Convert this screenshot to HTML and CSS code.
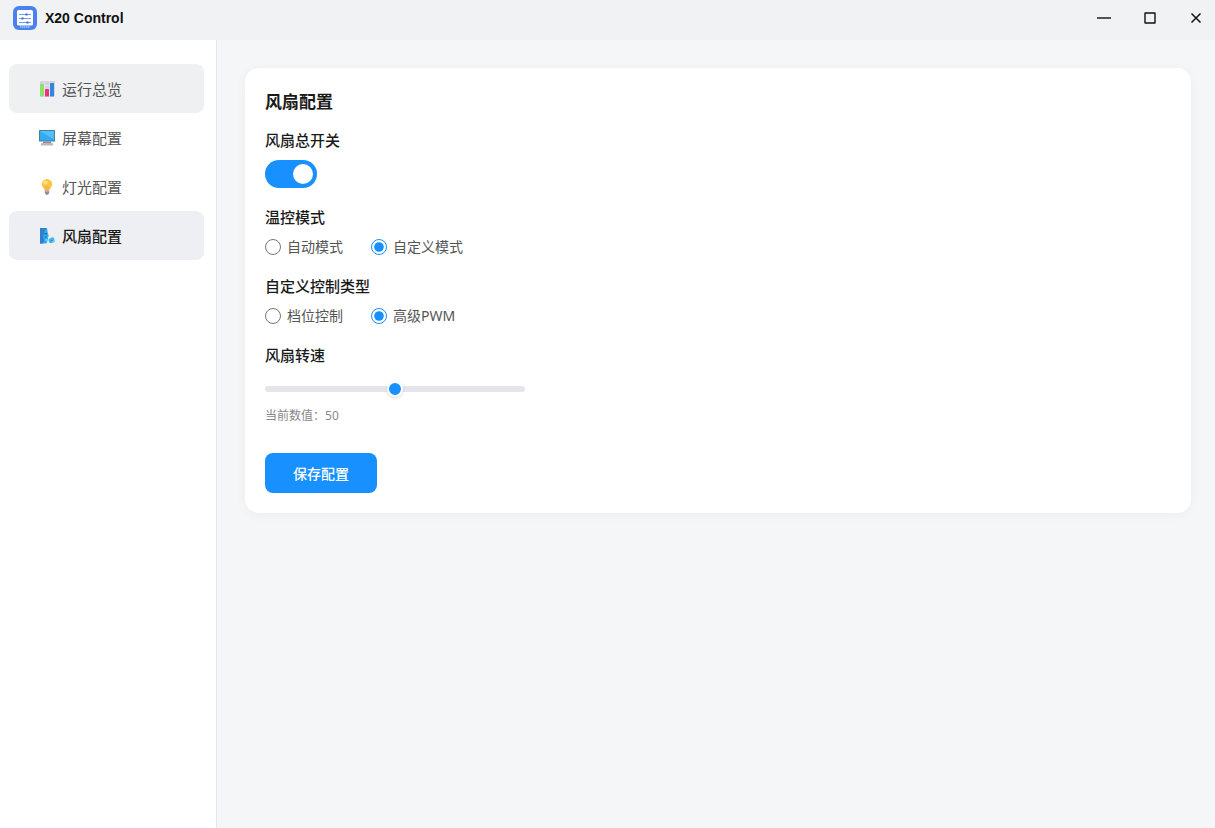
FILE: index.html
```html
<!DOCTYPE html>
<html lang="zh-CN">
<head>
    <meta charset="UTF-8">
    <meta name="viewport" content="width=device-width, initial-scale=1.0">
    <title>X20 Control</title>
    <link rel="stylesheet" href="styles.css">
</head>
<body>
    <!-- Title bar -->
    <header class="titlebar">
        <svg class="logo" viewBox="0 0 24 24" aria-hidden="true">
            <rect width="24" height="24" rx="6" fill="#4a80f0"/>
            <rect x="4" y="4" width="16" height="15.500" rx="1.500" fill="#fff"/>
            <path d="M6 8.500h12M6 12.500h12M6 16.500h12" stroke="#6f9cf5" stroke-width="1.200"/>
            <path d="M13.500 7.500v2M9.500 11.500v2M14.500 15.500v2" stroke="#2f68d8" stroke-width="2"/>
            <path d="M7 21h10" stroke="#a9c6fb" stroke-width="1.500" stroke-dasharray="1.500 0.500"/>
        </svg>
        <h1 class="app-name">X20 Control</h1>
        <div class="window-controls">
            <button type="button" class="window-button" aria-label="最小化">
                <svg viewBox="0 0 16 16"><path d="M1 8h14" stroke="#111" stroke-width="1.400"/></svg>
            </button>
            <button type="button" class="window-button" aria-label="最大化">
                <svg viewBox="0 0 16 16"><rect x="3" y="3" width="10" height="10" rx="0.300" fill="none" stroke="#111" stroke-width="1.400"/></svg>
            </button>
            <button type="button" class="window-button" aria-label="关闭">
                <svg viewBox="0 0 16 16"><path d="M3.500 3.500l9 9M12.500 3.500l-9 9" stroke="#111" stroke-width="1.500"/></svg>
            </button>
        </div>
    </header>

    <div class="layout">
        <!-- Sidebar -->
        <nav class="sidebar">
            <a href="#overview" class="nav-item hovered">
                <svg class="nav-icon" viewBox="0 0 16 16" aria-hidden="true">
                    <rect x="1" y="0" width="15" height="15.500" rx="1" fill="#d6d1de"/>
                    <path d="M1 4.500h15M1 8.500h15M1 12.500h15M5.500 0v15M10.500 0v15" stroke="#e8e4ee" stroke-width="0.800"/>
                    <rect x="1" y="3" width="4" height="12.500" rx="0.500" fill="#8ee06c"/>
                    <rect x="6" y="8" width="4" height="7.500" rx="0.500" fill="#ee2f7b"/>
                    <rect x="11" y="2" width="4" height="13.500" rx="0.500" fill="#2f86dc"/>
                </svg>
                <span>运行总览</span>
            </a>
            <a href="#screen" class="nav-item">
                <svg class="nav-icon" viewBox="0 0 16 16" aria-hidden="true">
                    <rect x="0" y="0" width="16" height="11.500" rx="0.500" fill="#477f9e"/>
                    <rect x="1" y="1" width="14" height="9.500" fill="#32acee"/>
                    <path d="M1 1h14v8.500z" fill="#52c0f6"/>
                    <rect x="4" y="11.500" width="8" height="2" fill="#8d8897"/>
                    <path d="M2.500 13h11l1 2.500h-13z" fill="#bbb6c3"/>
                </svg>
                <span>屏幕配置</span>
            </a>
            <a href="#light" class="nav-item">
                <svg class="nav-icon" viewBox="0 0 16 16" aria-hidden="true">
                    <path d="M8 0a5.200 5.200 0 0 0-5.200 5.200c0 2.800 2.200 3.800 3 6.300h4.400c.8-2.500 3-3.500 3-6.300A5.200 5.200 0 0 0 8 0z" fill="#fcc446"/>
                    <path d="M7.200 11L6.500 7.500h3L8.800 11" fill="none" stroke="#f0a63c" stroke-width="0.700"/>
                    <ellipse cx="6.500" cy="3.500" rx="2.200" ry="2" fill="#ffe17b"/>
                    <path d="M5.800 11.500h4.400V14l-1.200 1.800H7L5.800 14z" fill="#9b7fa0"/>
                    <path d="M5.800 12.700h4.400" stroke="#cbb8ca" stroke-width="0.800"/>
                </svg>
                <span>灯光配置</span>
            </a>
            <a href="#fan" class="nav-item active" aria-current="page">
                <svg class="nav-icon" viewBox="0 0 16 16" aria-hidden="true">
                    <path d="M1 0h7l.8 5 1 3-1 1.200.2 1.800-.6 2-.9 2.500H1z" fill="#35a8ec"/>
                    <path d="M1 0h6.500L5 4l-.8 5L5 12l-1 3.500H1z" fill="#2f7fcb"/>
                    <path d="M5.500 5.500l2.500.5" stroke="#174f8d" stroke-width="1"/>
                    <path d="M6 9h1.500" stroke="#1c62a8" stroke-width="1"/>
                    <path d="M6.500 12h2" stroke="#75dbfa" stroke-width="1.500"/>
                    <circle cx="11" cy="12" r="1.700" fill="#4cc6f5"/>
                    <circle cx="13.300" cy="11.300" r="2" fill="#3db6ee"/>
                    <circle cx="14" cy="13" r="1.800" fill="#55c9f6"/>
                    <circle cx="11.800" cy="13.500" r="1.700" fill="#3aaeea"/>
                    <circle cx="12.900" cy="12.300" r="0.800" fill="#2489cb"/>
                </svg>
                <span>风扇配置</span>
            </a>
        </nav>

        <!-- Main content -->
        <main class="content">
            <form class="card">
                <h2 class="card-title">风扇配置</h2>

                <div class="form-group">
                    <label class="group-label" for="fanSwitch">风扇总开关</label>
                    <input type="checkbox" role="switch" class="switch" id="fanSwitch" checked>
                </div>

                <fieldset class="form-group">
                    <legend class="group-label">温控模式</legend>
                    <div class="radio-row">
                        <label class="radio"><input type="radio" name="mode" value="auto">自动模式</label>
                        <label class="radio"><input type="radio" name="mode" value="custom" checked>自定义模式</label>
                    </div>
                </fieldset>

                <fieldset class="form-group">
                    <legend class="group-label">自定义控制类型</legend>
                    <div class="radio-row">
                        <label class="radio"><input type="radio" name="type" value="level">档位控制</label>
                        <label class="radio"><input type="radio" name="type" value="pwm" checked>高级PWM</label>
                    </div>
                </fieldset>

                <div class="form-group speed">
                    <label class="group-label" for="fanSpeed">风扇转速</label>
                    <input type="range" class="slider" id="fanSpeed" min="0" max="100" value="50">
                    <p class="hint">当前数值：<output id="speedValue" for="fanSpeed">50</output></p>
                </div>

                <button type="button" class="save-button">保存配置</button>
            </form>
        </main>
    </div>

    <script>
        document.getElementById('fanSpeed').addEventListener('input', function() {
            document.getElementById('speedValue').textContent = this.value;
        });
    </script>
</body>
</html>
```
FILE: styles.css
```css
* {
    box-sizing: border-box;
}

body {
    margin: 0;
    min-height: 100vh;
    display: flex;
    flex-direction: column;
    background-color: #f5f6f8;
    color: #1a1a1a;
    font-family: "Noto Sans", "Noto Sans CJK SC", sans-serif;
    font-size: 14px;
}

button, input {
    font-family: inherit;
}

/* Title bar */
.titlebar {
    display: flex;
    align-items: center;
    height: 40px;
    padding: 0 0 4px 13px;
    background-color: #f1f2f4;
}

.logo {
    width: 24px;
    height: 24px;
}

.app-name {
    margin: 0 auto 0 8px;
    color: #111;
    font-family: "Liberation Sans", Arial, sans-serif;
    font-size: 14px;
    font-weight: 700;
}

.window-controls {
    display: flex;
    margin-right: -4px;
}

.window-button {
    display: flex;
    align-items: center;
    justify-content: center;
    width: 46px;
    height: 36px;
    padding: 0;
    border: none;
    background: none;
}

.window-button svg {
    width: 16px;
    height: 16px;
}

.layout {
    flex: 1;
    display: flex;
}

/* Sidebar */
.sidebar {
    flex: none;
    width: 217px;
    padding: 24px 12px 24px 9px;
    background-color: #fff;
    border-right: 1px solid #e5e6eb;
}

.nav-item {
    display: flex;
    align-items: center;
    gap: 7px;
    height: 49px;
    padding-left: 30px;
    border-radius: 8px;
    color: #555;
    font-size: 15px;
    text-decoration: none;
}

.nav-item.hovered {
    background-color: #eff0f2;
}

.nav-item.active {
    background-color: #eeeff3;
    color: #1a1a1a;
    font-weight: 500;
}

.nav-icon {
    width: 16px;
    height: 16px;
}

/* Card */
.content {
    flex: 1;
    padding: 28px 24px 28px 28px;
}

.card {
    padding: 20px;
    background-color: #fff;
    border-radius: 14px;
    box-shadow: 0 2px 12px rgba(0, 0, 0, 0.04);
}

.card-title {
    margin: 0 0 12px;
    font-size: 17px;
    font-weight: 600;
    line-height: 28px;
}

.form-group {
    margin: 0 0 17px;
    padding: 0;
    border: none;
}

.form-group.speed {
    margin-bottom: 24px;
}

.group-label {
    display: block;
    margin-bottom: 8px;
    padding: 0;
    font-size: 15px;
    font-weight: 500;
    line-height: 24px;
}

.switch {
    appearance: none;
    display: flex;
    align-items: center;
    width: 52px;
    height: 28px;
    margin: 0;
    padding: 4px;
    border-radius: 14px;
    background-color: #c9cdd4;
}

.switch::before {
    content: "";
    width: 20px;
    height: 20px;
    border-radius: 50%;
    background-color: #fff;
}

.switch:checked {
    justify-content: flex-end;
    background-color: #1890ff;
}

.radio-row {
    display: flex;
    gap: 28px;
}

.radio {
    display: flex;
    align-items: center;
    gap: 6px;
    color: #555;
    line-height: 20px;
}

.radio input {
    width: 16px;
    height: 16px;
    margin: 0;
    accent-color: #1890ff;
}

.slider {
    appearance: none;
    display: block;
    width: 260px;
    height: 28px;
    margin: 0;
    background: none;
}

.slider::-webkit-slider-runnable-track {
    height: 6px;
    border-radius: 3px;
    background-color: #e5e6eb;
}

.slider::-webkit-slider-thumb {
    appearance: none;
    width: 16px;
    height: 16px;
    margin-top: -5px;
    border: 2px solid #fff;
    border-radius: 50%;
    background-color: #1890ff;
    box-shadow: 0 1px 3px rgba(0, 0, 0, 0.15);
}

.hint {
    margin: 0;
    color: #888;
    font-size: 12px;
    line-height: 26px;
}

.save-button {
    display: block;
    height: 40px;
    padding: 0 28px;
    border: none;
    border-radius: 8px;
    background-color: #1890ff;
    color: #fff;
    font-size: 14px;
    font-weight: 500;
}
```
